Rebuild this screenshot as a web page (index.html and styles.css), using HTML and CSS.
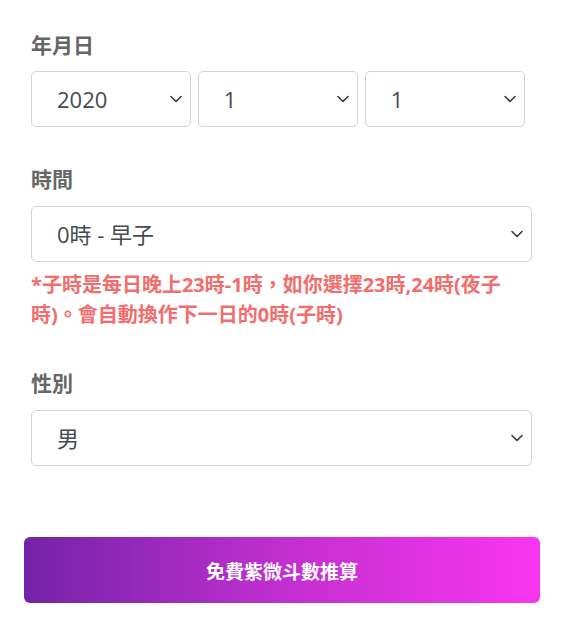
FILE: index.html
```html
<!DOCTYPE html>
<html lang="zh-Hant">
<head>
<meta charset="utf-8">
<title>紫微斗數</title>
<link rel="stylesheet" href="styles.css">
</head>
<body>
<form class="page">
  <div class="group">
    <label class="label">年月日</label>
    <div class="date-row">
      <select class="field"><option>2020</option></select>
      <select class="field"><option>1</option></select>
      <select class="field"><option>1</option></select>
    </div>
  </div>
  <div class="group group-time">
    <label class="label">時間</label>
    <select class="field"><option>0時 - 早子</option></select>
    <p class="note">*子時是每日晚上23時-1時，如你選擇23時,24時(夜子時)。會自動換作下一日的0時(子時)</p>
  </div>
  <div class="group group-sex">
    <label class="label">性別</label>
    <select class="field"><option>男</option></select>
  </div>
  <button type="button" class="submit">免費紫微斗數推算</button>
</form>
</body>
</html>
```
FILE: styles.css
```css
* { box-sizing: border-box; }
html, body { margin: 0; background: #fff; }
body {
  font-family: "Open Sans", "Noto Sans CJK TC", sans-serif;
  color: #495057;
}
.page {
  padding: 30px 24px 0 24px;
}
.group {
  padding: 0 8px 0 7px;
}
.group-time { margin-top: 37px; }
.group-sex { margin-top: 38px; }
.label {
  display: block;
  font-size: 21px;
  line-height: 30px;
  font-weight: 700;
  color: #666;
  margin-bottom: 11px;
}
.group-time .label, .group-sex .label { margin-bottom: 12px; }
.date-row {
  width: 494px;
  display: grid;
  grid-template-columns: repeat(3, 1fr);
  column-gap: 6.5px;
}
.field {
  display: block;
  width: 100%;
  height: 56px;
  padding: 0 30px 0 25px;
  font-family: "Open Sans", "Noto Sans CJK TC", sans-serif;
  font-size: 22px;
  color: #454a50;
  background-color: #fff;
  background-image: url("data:image/svg+xml,%3Csvg xmlns='http://www.w3.org/2000/svg' viewBox='0 0 12 8'%3E%3Cpath d='M1 1.5l5 5 5-5' fill='none' stroke='%23343a40' stroke-width='1.6' stroke-linecap='round' stroke-linejoin='round'/%3E%3C/svg%3E");
  background-repeat: no-repeat;
  background-position: right 8px center;
  background-size: 12px 8px;
  border: 1px solid #d2d4d7;
  border-radius: 5px;
  appearance: none;
  -webkit-appearance: none;
  outline: none;
}
.note {
  margin: 8px 0 0;
  font-size: 20px;
  line-height: 30px;
  font-weight: 700;
  color: #f56c6c;
  font-family: "Open Sans", "Noto Sans CJK TC", sans-serif;
}
.submit {
  display: block;
  width: 100%;
  height: 66px;
  margin-top: 71px;
  border: 0;
  border-radius: 6px;
  background: linear-gradient(90deg, #7323a7 0%, #c12fd0 50%, #f935f0 100%);
  color: #fff;
  font-family: "Noto Sans CJK TC", sans-serif;
  font-size: 19px;
  font-weight: 700;
  cursor: pointer;
}
```
